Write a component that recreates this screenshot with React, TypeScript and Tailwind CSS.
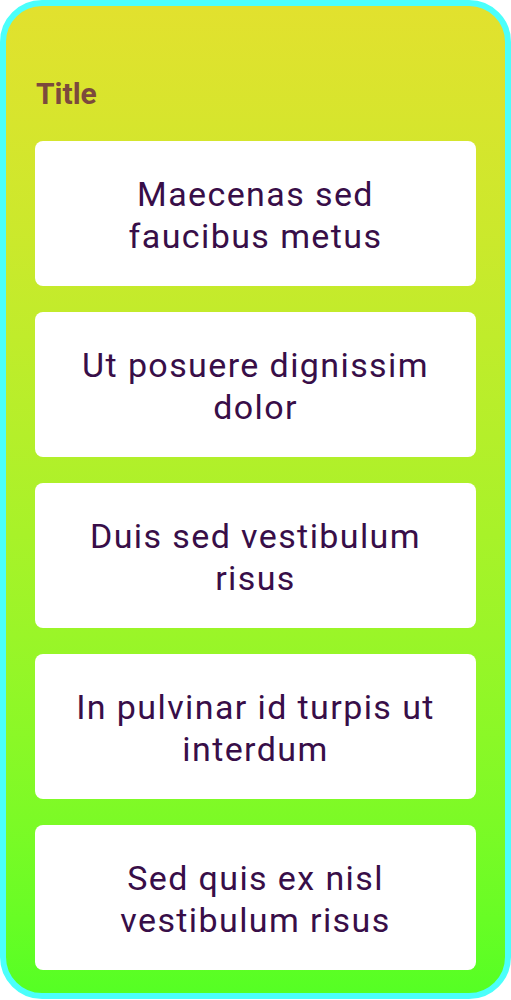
import React from "react";

const items = [
  "Maecenas sed faucibus metus",
  "Ut posuere dignissim dolor",
  "Duis sed vestibulum risus",
  "In pulvinar id turpis ut interdum",
  "Sed quis ex nisl vestibulum risus",
];

export default function App() {
  return (
    <div className="w-[511px] h-[1000px] bg-white" style={{ fontFamily: "Roboto, sans-serif" }}>
      <div className="h-[999px] rounded-[42px] border-[6px] border-[#4bfffb] bg-gradient-to-b from-[#e2e12e] to-[#55ff24] px-[29px] pt-[70px] pb-[22px] flex flex-col">
        <div className="text-[30px] font-bold text-[#7c4a3c] leading-[36px] pl-[1px] mb-[29px]">Title</div>
        <div className="flex flex-col gap-[26px]">
          {items.map((t) => (
            <div key={t} className="h-[145px] rounded-[8px] bg-white flex items-center justify-center px-[34px] pt-[2px]">
              <div className="text-center text-[34px] leading-[42px] tracking-[1.4px] text-[#380e48]">{t}</div>
            </div>
          ))}
        </div>
      </div>
    </div>
  );
}
